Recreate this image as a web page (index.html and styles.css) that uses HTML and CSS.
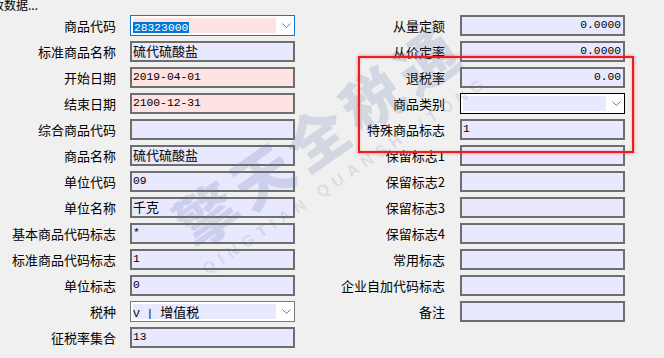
FILE: index.html
```html
<!DOCTYPE html>
<html lang="zh-CN">
<head>
    <meta charset="UTF-8">
    <title>商品编码</title>
    <link rel="stylesheet" href="styles.css">
</head>
<body>
    <div class="status">接收数据...</div>

    <div class="form">
        <div class="col col-left">
            <label>商品代码</label>
            <div class="combo focus">
                <div class="combo-field pink"><span class="sel">28323000</span></div>
                <svg class="arrow" width="9" height="5" viewBox="0 0 9 5"><path d="M0.5 0.5 L4.5 4.5 L8.5 0.5" fill="none" stroke="#777" stroke-width="1"/></svg>
            </div>

            <label>标准商品名称</label>
            <div class="field">硫代硫酸盐</div>

            <label>开始日期</label>
            <div class="field pink mono">2019-04-01</div>

            <label>结束日期</label>
            <div class="field pink mono">2100-12-31</div>

            <label>综合商品代码</label>
            <div class="field"></div>

            <label>商品名称</label>
            <div class="field">硫代硫酸盐</div>

            <label>单位代码</label>
            <div class="field mono">09</div>

            <label>单位名称</label>
            <div class="field">千克</div>

            <label>基本商品代码标志</label>
            <div class="field mono">*</div>

            <label>标准商品代码标志</label>
            <div class="field mono">1</div>

            <label>单位标志</label>
            <div class="field mono">0</div>

            <label>税种</label>
            <div class="combo">
                <div class="combo-field"><span class="mono">V | </span>增值税</div>
                <svg class="arrow" width="9" height="5" viewBox="0 0 9 5"><path d="M0.5 0.5 L4.5 4.5 L8.5 0.5" fill="none" stroke="#777" stroke-width="1"/></svg>
            </div>

            <label>征税率集合</label>
            <div class="field mono">13</div>
        </div>

        <div class="col col-right">
            <label>从量定额</label>
            <div class="field mono num">0.0000</div>

            <label>从价定率</label>
            <div class="field mono num">0.0000</div>

            <label>退税率</label>
            <div class="field mono num">0.00</div>

            <label>商品类别</label>
            <div class="combo dark">
                <div class="combo-field"></div>
                <svg class="arrow" width="9" height="5" viewBox="0 0 9 5"><path d="M0.5 0.5 L4.5 4.5 L8.5 0.5" fill="none" stroke="#777" stroke-width="1"/></svg>
            </div>

            <label>特殊商品标志</label>
            <div class="field mono">1</div>

            <label>保留标志1</label>
            <div class="field"></div>

            <label>保留标志2</label>
            <div class="field"></div>

            <label>保留标志3</label>
            <div class="field"></div>

            <label>保留标志4</label>
            <div class="field"></div>

            <label>常用标志</label>
            <div class="field"></div>

            <label>企业自加代码标志</label>
            <div class="field"></div>

            <label>备注</label>
            <div class="field"></div>
        </div>
    </div>

    <!-- screenshot overlays: watermark + red annotation box -->
    <svg class="watermark" width="664" height="358" viewBox="0 0 664 358">
        <text class="wm-big" x="196" y="251" transform="rotate(-35 196 251)">擎天全税通</text>
        <text class="wm-small" x="207" y="275" textLength="335" transform="rotate(-34 207 275)">QINGTIAN QUANSHUITONG</text>
    </svg>
    <div class="highlight"></div>
</body>
</html>
```

FILE: styles.css
```css
body {
    margin: 0;
    width: 664px;
    height: 358px;
    overflow: hidden;
    position: relative;
    background: #f0f0f0;
    color: #000;
    font-family: "Noto Sans CJK SC", "Noto Sans", sans-serif;
    font-size: 13px;
}
.status {
    height: 16px;
    line-height: 12px;
    margin-top: -1px;
    margin-left: -20px;
    font-size: 12px;
    white-space: nowrap;
}
.form {
    display: flex;
}
.col {
    display: grid;
    grid-auto-rows: 21px;
    row-gap: 5px;
}
.col-left {
    grid-template-columns: 116px 165px;
    column-gap: 14px;
}
.col-right {
    grid-template-columns: 150px 165px;
    column-gap: 15px;
}
label {
    text-align: right;
    line-height: 21px;
    white-space: nowrap;
}
.field {
    box-sizing: border-box;
    background: #e8e8ff;
    border: 2px solid #6e6e6e;
    padding: 0 2px 0 1px;
    line-height: 16px;
    white-space: nowrap;
    overflow: hidden;
}
.pink {
    background: #ffe2e2;
}
.mono {
    font-family: "Liberation Mono", monospace;
    font-size: 11.3px;
}
.num {
    text-align: right;
}
.combo {
    box-sizing: border-box;
    display: flex;
    align-items: center;
    background: #fff;
    border: 1px solid #7a7a7a;
    padding: 2px 0 2px 2px;
}
.combo.focus {
    border-color: #0a78d4;
}
.combo.dark {
    border-color: #000;
}
.combo-field {
    width: 143px;
    height: 15px;
    line-height: 15px;
    background: #e8e8ff;
    white-space: nowrap;
    overflow: hidden;
}
.combo-field.pink {
    background: #ffe2e2;
}
.sel {
    background: #0078d7;
    color: #fff;
    font-family: "Liberation Mono", monospace;
    font-size: 11.3px;
    padding: 0 1px;
}
.arrow {
    margin-left: 6px;
}
.watermark {
    position: absolute;
    left: 0;
    top: 0;
    pointer-events: none;
}
.wm-big {
    font-family: "Noto Sans CJK SC", sans-serif;
    font-weight: 900;
    font-size: 60px;
    letter-spacing: 7px;
    fill: rgba(95, 115, 165, 0.2);
}
.wm-small {
    font-family: "Liberation Sans", sans-serif;
    font-weight: bold;
    font-size: 16px;
    fill: rgba(95, 115, 165, 0.16);
}
.highlight {
    position: absolute;
    left: 358px;
    top: 56px;
    width: 272px;
    height: 93px;
    border: 2px solid #f01c1c;
    box-shadow: 0 0 3px rgba(240, 30, 30, 0.6), inset 0 0 2px rgba(240, 30, 30, 0.4);
}
```
